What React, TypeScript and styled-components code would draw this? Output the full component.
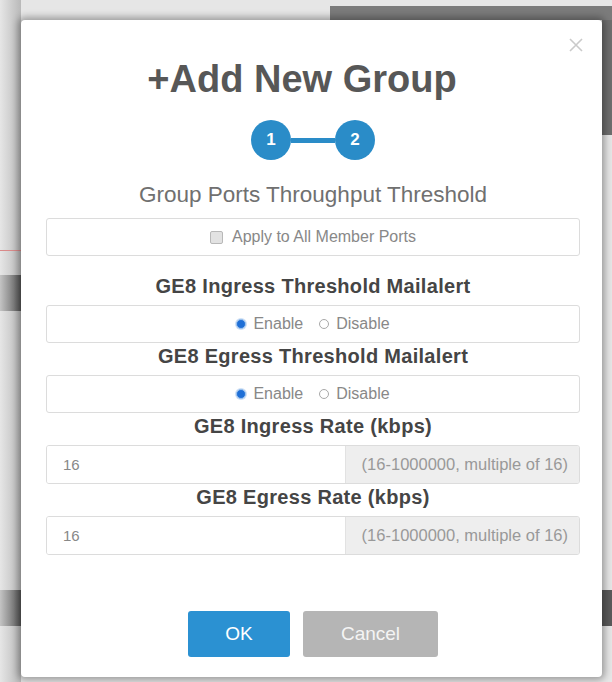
import React, { useState } from "react";
import styled, { createGlobalStyle } from "styled-components";

const Global = createGlobalStyle`
  html, body {
    margin: 0;
    padding: 0;
    background: #e2e2e2;
    font-family: "Liberation Sans", Arial, sans-serif;
  }
`;

// the dimmed page that lies under the dialog
const Backdrop = styled.div`
  width: 612px;
  height: 682px;
  box-sizing: border-box;
  padding: 20px 10px 7px 21px;
  overflow: hidden;
  background:
    linear-gradient(#7b7b7b, #7b7b7b) 330px 6px / 282px 14px no-repeat,
    linear-gradient(90deg, #c4c4c4, #585858) 0 275px / 21px 36px no-repeat,
    linear-gradient(90deg, #c4c4c4, #585858) 0 590px / 21px 36px no-repeat,
    linear-gradient(#d98a8a, #d98a8a) 0 250px / 21px 1px no-repeat,
    linear-gradient(#6e6e6e, #6e6e6e) 602px 20px / 10px 115px no-repeat,
    linear-gradient(#5a5a5a, #5a5a5a) 602px 590px / 10px 36px no-repeat,
    linear-gradient(90deg, #e6e6e6, #b9b9b9) 0 0 / 21px 682px no-repeat,
    #e6e6e6;
`;

const Modal = styled.div`
  position: relative;
  width: 581px;
  box-sizing: border-box;
  padding: 37px 22px 20px 25px;
  background: #fff;
  border-radius: 4px;
  box-shadow: 0 0 7px 3px rgba(0, 0, 0, 0.32);
  display: flex;
  flex-direction: column;
  align-items: stretch;
`;

const Close = styled.button`
  position: absolute;
  top: 17px;
  right: 18px;
  width: 16px;
  height: 16px;
  padding: 0;
  border: none;
  background: none;
  cursor: pointer;
`;

const Title = styled.h1`
  margin: 0;
  padding-right: 22px;
  font-size: 38px;
  line-height: 44px;
  font-weight: bold;
  color: #575757;
  text-align: center;
`;

const Steps = styled.div`
  margin-top: 19px;
  display: flex;
  align-items: center;
  justify-content: center;
`;

const StepDot = styled.div`
  width: 40px;
  height: 40px;
  border-radius: 50%;
  background: #2a8cc8;
  color: #fff;
  font-size: 17px;
  font-weight: bold;
  display: flex;
  align-items: center;
  justify-content: center;
`;

const StepLine = styled.div`
  width: 44px;
  height: 5px;
  background: #2a8cc8;
`;

const Subtitle = styled.div`
  margin-top: 22px;
  font-size: 22.5px;
  line-height: 26px;
  color: #707070;
  text-align: center;
`;

const Box = styled.div<{ $gap?: number }>`
  height: 38px;
  box-sizing: border-box;
  margin-top: ${(p) => p.$gap ?? 5}px;
  border: 1px solid #dcdcdc;
  border-radius: 3px;
  display: flex;
  align-items: center;
  justify-content: center;
  gap: 9px;
  font-size: 16px;
  color: #888;
`;

const Check = styled.span`
  width: 11px;
  height: 11px;
  border: 1px solid #b8b8b8;
  background: #e2e2e2;
  border-radius: 2px;
`;

const Heading = styled.div<{ $gap?: number }>`
  margin-top: ${(p) => p.$gap ?? 0}px;
  font-size: 20px;
  line-height: 27px;
  font-weight: bold;
  letter-spacing: 0.3px;
  color: #454545;
  text-align: center;
`;

const RadioGroup = styled.div`
  display: flex;
  align-items: center;
  gap: 16px;
`;

const RadioLabel = styled.label`
  display: flex;
  align-items: center;
  gap: 7px;
  cursor: pointer;
`;

const RadioMark = styled.span<{ $on: boolean }>`
  width: 10px;
  height: 10px;
  border-radius: 50%;
  box-sizing: border-box;
  border: 1px solid ${(p) => (p.$on ? "#9cc3ee" : "#a8a8a8")};
  background: ${(p) => (p.$on ? "#1f6fd6" : "#fff")};
  box-shadow: ${(p) => (p.$on ? "0 0 0 1px #cfe0f5" : "none")};
`;

const Rate = styled.div`
  height: 39px;
  margin-top: 5px;
  box-sizing: border-box;
  border: 1px solid #dcdcdc;
  border-radius: 3px;
  display: flex;
  overflow: hidden;
`;

const RateInput = styled.input`
  flex: 1;
  min-width: 0;
  border: none;
  outline: none;
  padding: 0 16px;
  font-family: inherit;
  font-size: 15px;
  color: #888;
  background: #fff;
`;

const Addon = styled.div`
  width: 234px;
  background: #eee;
  border-left: 1px solid #e2e2e2;
  display: flex;
  align-items: center;
  justify-content: flex-end;
  padding-right: 11px;
  box-sizing: border-box;
  font-size: 16.5px;
  color: #999;
  white-space: nowrap;
`;

const Buttons = styled.div`
  margin-top: 56px;
  display: flex;
  justify-content: center;
  gap: 13px;
`;

const Btn = styled.button<{ $kind: "ok" | "cancel" }>`
  height: 46px;
  width: ${(p) => (p.$kind === "ok" ? 102 : 135)}px;
  border: none;
  border-radius: 3px;
  font-family: inherit;
  font-size: 19px;
  color: ${(p) => (p.$kind === "ok" ? "#fff" : "#f4f4f4")};
  background: ${(p) => (p.$kind === "ok" ? "#2b91d2" : "#b5b5b5")};
  cursor: pointer;
`;

function Radios(props: { value: boolean; onChange: (v: boolean) => void }) {
  return (
    <Box>
      <RadioGroup>
        <RadioLabel onClick={() => props.onChange(true)}>
          <RadioMark $on={props.value} />
          Enable
        </RadioLabel>
        <RadioLabel onClick={() => props.onChange(false)}>
          <RadioMark $on={!props.value} />
          Disable
        </RadioLabel>
      </RadioGroup>
    </Box>
  );
}

export default function App() {
  const [ingress, setIngress] = useState(true);
  const [egress, setEgress] = useState(true);
  const [inRate, setInRate] = useState("16");
  const [outRate, setOutRate] = useState("16");

  return (
    <>
      <Global />
      <Backdrop>
        <Modal>
          <Close aria-label="close">
            <svg width="16" height="16" viewBox="0 0 16 16">
              <path d="M2 2 L14 14 M14 2 L2 14" stroke="#cacaca" strokeWidth="1.6" />
            </svg>
          </Close>
          <Title>+Add New Group</Title>
          <Steps>
            <StepDot>1</StepDot>
            <StepLine />
            <StepDot>2</StepDot>
          </Steps>
          <Subtitle>Group Ports Throughput Threshold</Subtitle>
          <Box $gap={10}>
            <Check />
            Apply to All Member Ports
          </Box>

          <Heading $gap={17}>GE8 Ingress Threshold Mailalert</Heading>
          <Radios value={ingress} onChange={setIngress} />

          <Heading>GE8 Egress Threshold Mailalert</Heading>
          <Radios value={egress} onChange={setEgress} />

          <Heading>GE8 Ingress Rate (kbps)</Heading>
          <Rate>
            <RateInput value={inRate} onChange={(e) => setInRate(e.target.value)} />
            <Addon>(16-1000000, multiple of 16)</Addon>
          </Rate>

          <Heading>GE8 Egress Rate (kbps)</Heading>
          <Rate>
            <RateInput value={outRate} onChange={(e) => setOutRate(e.target.value)} />
            <Addon>(16-1000000, multiple of 16)</Addon>
          </Rate>

          <Buttons>
            <Btn $kind="ok">OK</Btn>
            <Btn $kind="cancel">Cancel</Btn>
          </Buttons>
        </Modal>
      </Backdrop>
    </>
  );
}
